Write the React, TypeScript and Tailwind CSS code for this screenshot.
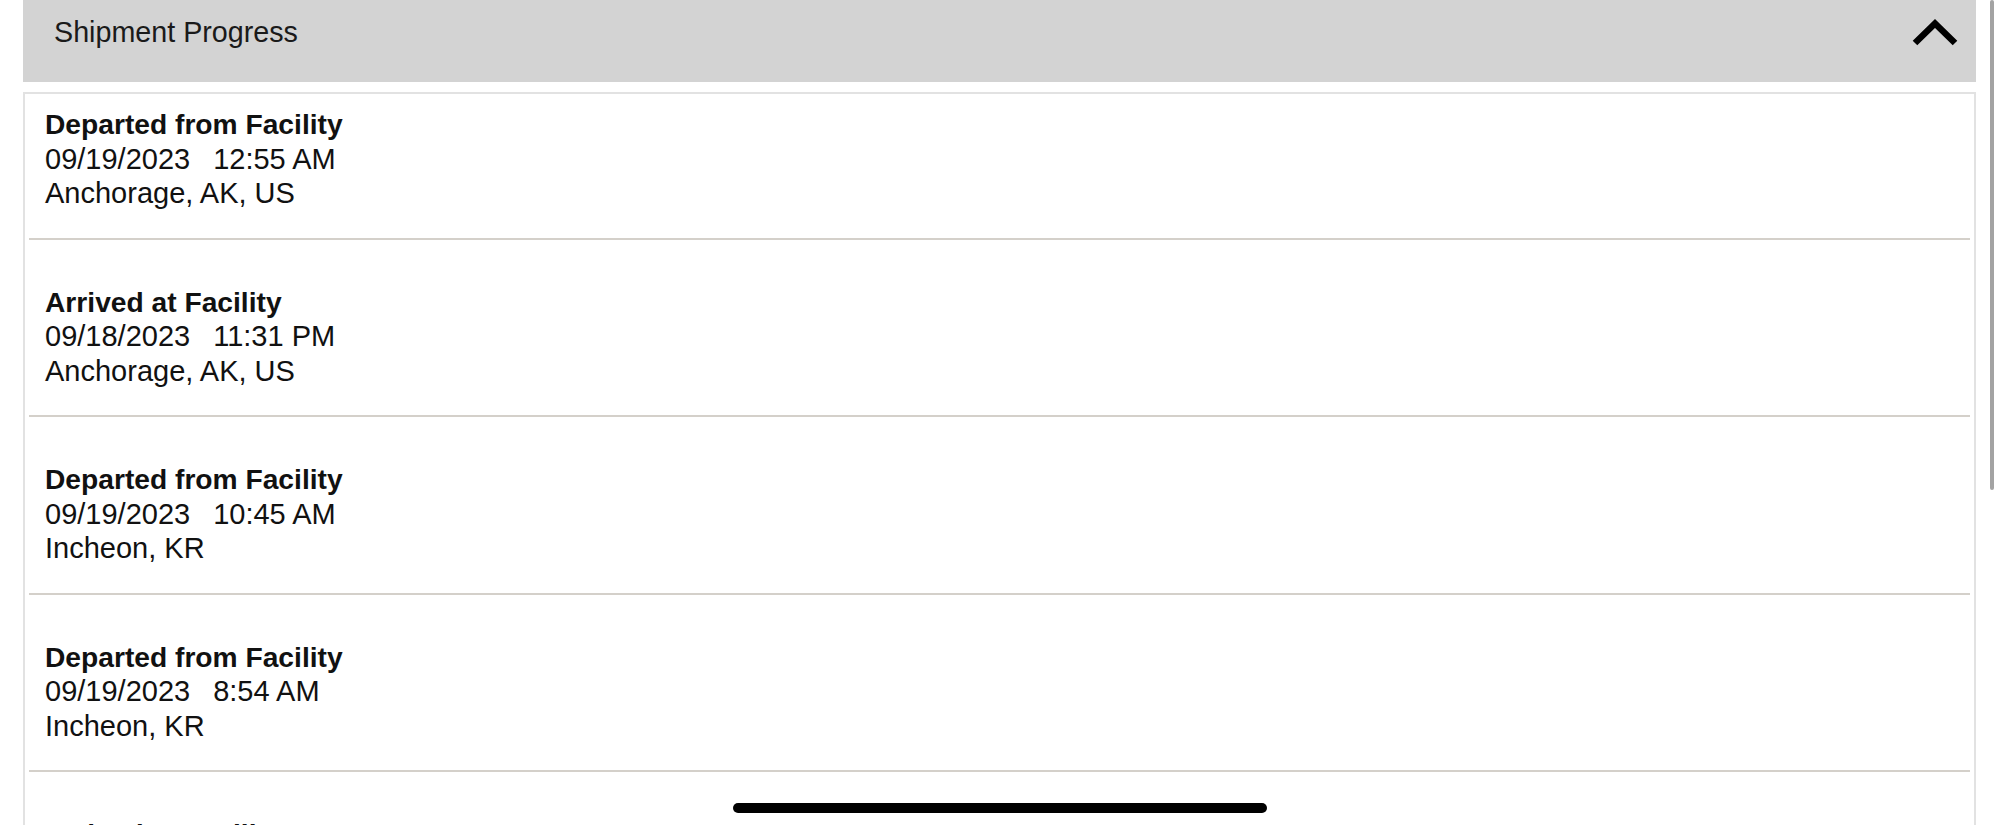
import * as React from 'react';

type Scan = { status: string; date: string; time: string; place: string };

const SCANS: Scan[] = [
  { status: 'Departed from Facility', date: '09/19/2023', time: '12:55 AM', place: 'Anchorage, AK, US' },
  { status: 'Arrived at Facility', date: '09/18/2023', time: '11:31 PM', place: 'Anchorage, AK, US' },
  { status: 'Departed from Facility', date: '09/19/2023', time: '10:45 AM', place: 'Incheon, KR' },
  { status: 'Departed from Facility', date: '09/19/2023', time: '8:54 AM', place: 'Incheon, KR' },
  { status: 'Arrived at Facility', date: '09/19/2023', time: '7:12 AM', place: 'Incheon, KR' },
];

function ChevronUp() {
  return (
    <svg width="50" height="32" viewBox="0 0 50 32" fill="none">
      <polyline points="5,27 25,7.5 45,27" stroke="#000" strokeWidth="6.5" strokeLinejoin="miter" />
    </svg>
  );
}

function ScanRow({ scan, first }: { scan: Scan; first: boolean }) {
  return (
    <div>
      <div className={`pl-[20px] ${first ? 'pt-[13px] pb-[27px]' : 'pt-[45px] pb-[27px]'}`}>
        <div className="text-[28.2px] leading-[34.5px] font-bold text-[#111]">{scan.status}</div>
        <div className="text-[29px] leading-[34.5px] text-[#111]">
          <span>{scan.date}</span>
          <span className="ml-[23px]">{scan.time}</span>
        </div>
        <div className="text-[29px] leading-[34.5px] text-[#111]">{scan.place}</div>
      </div>
      <div className="mx-[4px] h-[2px] bg-[#d4d0ca]" />
    </div>
  );
}

export default function App() {
  return (
    <div
      className="relative h-[825px] w-[2000px] overflow-hidden bg-white"
      style={{ fontFamily: '"Liberation Sans", Arial, sans-serif' }}
    >
      {/* section header */}
      <div className="ml-[23px] mr-[24px] flex h-[82px] items-start justify-between bg-[#d3d3d3] pl-[31px] pr-[16px]">
        <div className="pt-[15px] text-[28.7px] leading-[34.5px] text-[#1a1a1a]">Shipment Progress</div>
        <div className="pt-[16px]">
          <ChevronUp />
        </div>
      </div>

      {/* scan list */}
      <div className="ml-[23px] mr-[24px] mt-[10px] border-2 border-[#e2e2e2]">
        {SCANS.map((s, i) => (
          <ScanRow key={i} scan={s} first={i === 0} />
        ))}
      </div>

      {/* scroll indicator */}
      <div className="absolute right-[6px] top-0 h-[490px] w-[4px] rounded-full bg-[#a3a3a3]" />

      {/* home indicator */}
      <div className="absolute left-[733px] top-[803px] h-[10px] w-[534px] rounded-full bg-black" />
    </div>
  );
}
